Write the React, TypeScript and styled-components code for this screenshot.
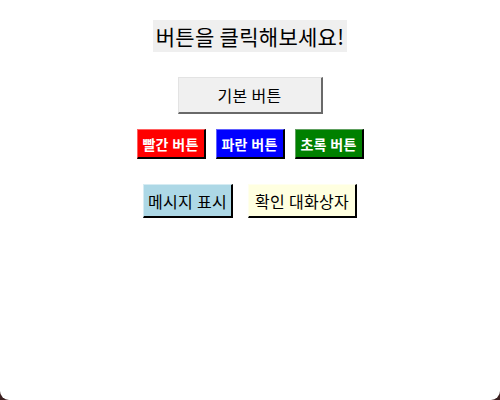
import React from 'react'
import styled, { createGlobalStyle } from 'styled-components'

const GlobalStyle = createGlobalStyle`
  html {
    background: #3b2020;
    height: 100%;
  }
  body {
    margin: 0;
    height: 100%;
    background: #ffffff;
    border-radius: 0 0 9px 9px;
    font-family: "Noto Sans CJK KR", "Noto Sans", sans-serif;
  }
  #root {
    height: 100%;
  }
`

const Page = styled.div`
  display: flex;
  flex-direction: column;
  align-items: center;
  padding-top: 20px;
`

const Title = styled.div`
  background: #efefef;
  height: 32px;
  padding: 0 3px;
  display: flex;
  align-items: center;
  font-size: 21px;
  letter-spacing: 0.3px;
  color: #000;
  margin-bottom: 25px;
`

const Row = styled.div<{ $gap: number; $mb: number }>`
  display: flex;
  gap: ${p => p.$gap}px;
  margin-bottom: ${p => p.$mb}px;
`

const Button = styled.button<{
  $bg: string
  $light: string
  $dark: string
  $color?: string
  $w: number
  $h: number
  $bold?: boolean
  $size: number
}>`
  box-sizing: border-box;
  width: ${p => p.$w}px;
  height: ${p => p.$h}px;
  background: ${p => p.$bg};
  color: ${p => p.$color || '#000'};
  font-family: "Noto Sans CJK KR", "Noto Sans", sans-serif;
  font-size: ${p => p.$size}px;
  font-weight: ${p => (p.$bold ? 700 : 400)};
  letter-spacing: 0.3px;
  border-style: solid;
  border-width: 1px 2px 2px 1px;
  border-color: ${p => p.$light} ${p => p.$dark} ${p => p.$dark} ${p => p.$light};
  padding: 0;
  display: flex;
  align-items: center;
  justify-content: center;
  white-space: nowrap;
  cursor: pointer;
`

export default function App() {
  return (
    <>
      <GlobalStyle />
      <Page>
        <Title>버튼을 클릭해보세요!</Title>
        <Row $gap={0} $mb={15}>
          <Button $bg="#f0f0f0" $light="#e3e3e3" $dark="#696969" $w={145} $h={37} $size={16}>
            기본 버튼
          </Button>
        </Row>
        <Row $gap={10} $mb={25}>
          <Button $bg="#ff0000" $light="#ff6060" $dark="#000000" $color="#fff" $w={69} $h={30} $size={14} $bold>
            빨간 버튼
          </Button>
          <Button $bg="#0000ff" $light="#6060ff" $dark="#000000" $color="#fff" $w={69} $h={30} $size={14} $bold>
            파란 버튼
          </Button>
          <Button $bg="#008000" $light="#60a060" $dark="#000000" $color="#fff" $w={69} $h={30} $size={14} $bold>
            초록 버튼
          </Button>
        </Row>
        <Row $gap={15} $mb={0}>
          <Button $bg="#add8e6" $light="#d6ecf3" $dark="#000000" $w={90} $h={34} $size={16}>
            메시지 표시
          </Button>
          <Button $bg="#ffffe0" $light="#ffffef" $dark="#000000" $w={109} $h={34} $size={16}>
            확인 대화상자
          </Button>
        </Row>
      </Page>
    </>
  )
}
